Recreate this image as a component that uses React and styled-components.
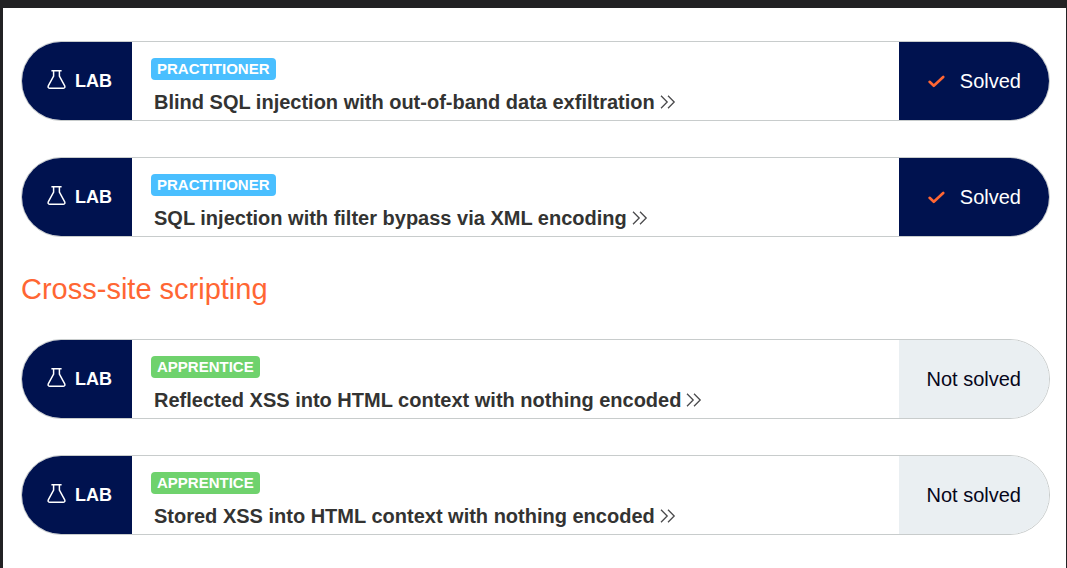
import React from "react";
import styled, { createGlobalStyle } from "styled-components";

const GlobalStyle = createGlobalStyle`
  * { box-sizing: border-box; }
  body {
    margin: 0;
    background: #222224;
    font-family: "Liberation Sans", Arial, sans-serif;
    color: #333332;
  }
`;

const Page = styled.main`
  margin: 8px 1px 0 3px;
  padding: 33px 16px 33px 18px;
  min-height: calc(100vh - 8px);
  background: #ffffff;
`;

const LabList = styled.ul`
  display: flex;
  flex-direction: column;
  gap: 36px;
  margin: 0;
  padding: 0;
  list-style: none;
`;

const LabRow = styled.li`
  display: flex;
  height: 80px;
  border: 1px solid #c8cccc;
  border-radius: 40px;
  overflow: hidden;
`;

const LabTag = styled.div`
  display: flex;
  align-items: center;
  gap: 9px;
  width: 110px;
  padding-left: 25px;
  flex: none;
  background: #00124f;
  color: #ffffff;
  font-size: 18px;
  font-weight: 700;
  line-height: 20px;
`;

const FlaskSvg = styled.svg`
  display: block;
  flex: none;
  margin-bottom: 3px;
`;

const LabBody = styled.div`
  flex: 1;
  min-width: 0;
  padding: 16px 19px 0;
`;

const Level = styled.span`
  display: block;
  width: fit-content;
  padding: 0 6px;
  border-radius: 4px;
  background: ${(p) => (p.$level === "Apprentice" ? "#6fd26d" : "#4abfff")};
  color: #ffffff;
  font-size: 15px;
  font-weight: 700;
  line-height: 22px;
  text-transform: uppercase;
`;

const LabLink = styled.a`
  display: flex;
  align-items: center;
  gap: 5px;
  margin-top: 10px;
  padding-left: 3px;
  color: inherit;
  font-size: 20px;
  font-weight: 700;
  line-height: 24px;
  text-decoration: none;
`;

const Status = styled.div`
  display: flex;
  align-items: center;
  justify-content: flex-end;
  gap: 15px;
  width: 150px;
  padding-right: 28px;
  flex: none;
  background: ${(p) => (p.$solved ? "#00124f" : "#eaeff2")};
  color: ${(p) => (p.$solved ? "#ffffff" : "#06061a")};
  font-size: 20px;
  line-height: 24px;
`;

const TopicHeading = styled.h2`
  margin: 34px 0 32px;
  color: #ff6633;
  font-size: 29px;
  font-weight: 400;
  line-height: 36px;
`;

function FlaskIcon() {
  return (
    <FlaskSvg width="19" height="19" viewBox="0 0 19 19" fill="none" stroke="#ffffff" strokeWidth="1.5" strokeLinejoin="round" aria-hidden="true">
      <path d="M4.4.8H14.6M6.6.8V6.2L1.4 15.6Q.4 18.2 2.6 18.2H16.4Q18.6 18.2 17.6 15.6L12.4 6.2V.8" />
    </FlaskSvg>
  );
}

function CheckIcon() {
  return (
    <svg width="17" height="13" viewBox="0 0 17 13" fill="none" stroke="#ff6633" strokeWidth="2.6" strokeLinecap="round" strokeLinejoin="round" aria-hidden="true">
      <path d="M1.6 6.8L5.8 10.8L15.2 2" />
    </svg>
  );
}

function DoubleChevron() {
  return (
    <svg width="16" height="14" viewBox="0 0 16 14" fill="none" stroke="#4a4a4c" strokeWidth="1.3" aria-hidden="true">
      <path d="M1 .8L7.2 7L1 13.2M8 .8L14.2 7L8 13.2" />
    </svg>
  );
}

function Lab({ level, title, solved }) {
  return (
    <LabRow>
      <LabTag>
        <FlaskIcon />
        LAB
      </LabTag>
      <LabBody>
        <Level $level={level}>{level}</Level>
        <LabLink href="#">
          {title}
          <DoubleChevron />
        </LabLink>
      </LabBody>
      <Status $solved={solved}>
        {solved && <CheckIcon />}
        {solved ? "Solved" : "Not solved"}
      </Status>
    </LabRow>
  );
}

export default function App() {
  return (
    <>
      <GlobalStyle />
      <Page>
        <LabList>
          <Lab level="Practitioner" title="Blind SQL injection with out-of-band data exfiltration" solved />
          <Lab level="Practitioner" title="SQL injection with filter bypass via XML encoding" solved />
        </LabList>
        <TopicHeading>Cross-site scripting</TopicHeading>
        <LabList>
          <Lab level="Apprentice" title="Reflected XSS into HTML context with nothing encoded" />
          <Lab level="Apprentice" title="Stored XSS into HTML context with nothing encoded" />
        </LabList>
      </Page>
    </>
  );
}
